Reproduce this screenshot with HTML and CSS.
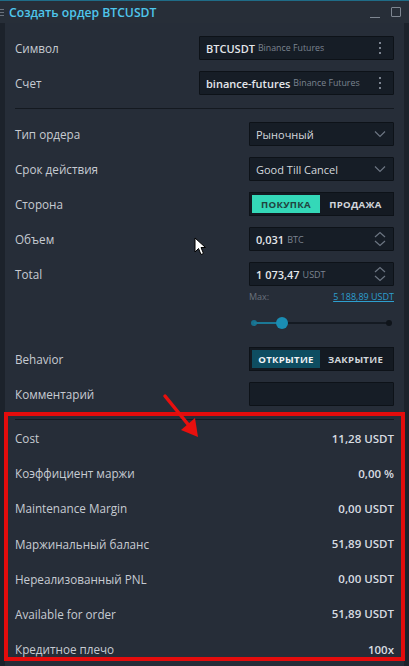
FILE: index.html
```html
<!DOCTYPE html>
<html lang="ru">
<head>
<meta charset="utf-8">
<title>Создать ордер BTCUSDT</title>
<link rel="stylesheet" href="styles.css">
</head>
<body>
<div class="window">
  <div class="titlebar">
    <span class="grip"><i></i><i></i><i></i></span>
    <span class="title">Создать ордер BTCUSDT</span>
    <span class="tb-btns">
      <span class="tb-min"></span>
      <span class="tb-max"></span>
    </span>
  </div>
  <div class="frame">
    <div class="panel">
      <div class="row">
        <span class="label">Символ</span>
        <div class="field wide">
          <span class="val">BTCUSDT</span><span class="sub">Binance Futures</span>
          <span class="kebab"><i></i><i></i><i></i></span>
        </div>
      </div>
      <div class="row">
        <span class="label">Счет</span>
        <div class="field wide">
          <span class="val">binance-futures</span><span class="sub">Binance Futures</span>
          <span class="kebab"><i></i><i></i><i></i></span>
        </div>
      </div>
      <div class="divider"></div>
      <div class="row">
        <span class="label">Тип ордера</span>
        <div class="field">
          <span class="val light">Рыночный</span>
          <svg class="chev" width="12" height="8" viewBox="0 0 12 8"><path d="M1 1.5 L6 6.5 L11 1.5" fill="none" stroke="#6c7582" stroke-width="1.2"/></svg>
        </div>
      </div>
      <div class="row">
        <span class="label">Срок действия</span>
        <div class="field">
          <span class="val light">Good Till Cancel</span>
          <svg class="chev" width="12" height="8" viewBox="0 0 12 8"><path d="M1 1.5 L6 6.5 L11 1.5" fill="none" stroke="#6c7582" stroke-width="1.2"/></svg>
        </div>
      </div>
      <div class="row">
        <span class="label">Сторона</span>
        <div class="toggle">
          <span class="seg buy">ПОКУПКА</span>
          <span class="seg">ПРОДАЖА</span>
        </div>
      </div>
      <div class="row">
        <span class="label">Объем</span>
        <div class="field">
          <span class="val">0,031</span><span class="unit">BTC</span>
          <svg class="spin" width="12" height="16" viewBox="0 0 12 16"><path d="M1 6 L6 1.5 L11 6 M1 10 L6 14.5 L11 10" fill="none" stroke="#6c7582" stroke-width="1.2"/></svg>
        </div>
      </div>
      <div class="row total">
        <span class="label">Total</span>
        <div class="ctrl-col">
          <div class="field">
            <span class="val">1 073,47</span><span class="unit">USDT</span>
            <svg class="spin" width="12" height="16" viewBox="0 0 12 16"><path d="M1 6 L6 1.5 L11 6 M1 10 L6 14.5 L11 10" fill="none" stroke="#6c7582" stroke-width="1.2"/></svg>
          </div>
          <div class="maxline">
            <span class="maxlbl">Max:</span>
            <span class="maxval">5 188,89 USDT</span>
          </div>
          <div class="slider">
            <span class="dot left"></span>
            <span class="fill"></span>
            <span class="knob"></span>
            <span class="dot right"></span>
          </div>
        </div>
      </div>
      <div class="row">
        <span class="label">Behavior</span>
        <div class="toggle">
          <span class="seg open">ОТКРЫТИЕ</span>
          <span class="seg">ЗАКРЫТИЕ</span>
        </div>
      </div>
      <div class="row">
        <span class="label">Комментарий</span>
        <div class="field"></div>
      </div>
      <div class="divider second"></div>
      <div class="info">
        <div class="irow"><span class="label">Cost</span><span class="ival">11,28 USDT</span></div>
        <div class="irow"><span class="label">Коэффициент маржи</span><span class="ival">0,00 %</span></div>
        <div class="irow"><span class="label">Maintenance Margin</span><span class="ival">0,00 USDT</span></div>
        <div class="irow"><span class="label">Маржинальный баланс</span><span class="ival">51,89 USDT</span></div>
        <div class="irow"><span class="label">Нереализованный PNL</span><span class="ival">0,00 USDT</span></div>
        <div class="irow"><span class="label">Available for order</span><span class="ival">51,89 USDT</span></div>
        <div class="irow"><span class="label">Кредитное плечо</span><span class="ival">100x</span></div>
      </div>
    </div>
  </div>

  <div class="redbox"></div>
  <svg class="arrow" width="60" height="60" viewBox="0 0 60 60">
    <line x1="5" y1="6" x2="31" y2="38" stroke="#e8100e" stroke-width="3.5" stroke-linecap="round"/>
    <polygon points="21,40 35,28 38,47" fill="#e8100e"/>
  </svg>
  <svg class="cursor" width="14" height="20" viewBox="0 0 14 20">
    <path d="M1 1 L1 15 L4.5 11.5 L7 17.5 L9.5 16.5 L7 10.5 L11.5 10.5 Z" fill="#ffffff" stroke="#000000" stroke-width="1" stroke-linejoin="miter"/>
  </svg>
</div>
</body>
</html>
```

FILE: styles.css
```css
* { box-sizing: border-box; }
html, body { margin: 0; padding: 0; }
body {
  background: #1c222b;
  font-family: "Open Sans", "Noto Sans", sans-serif;
  font-size: 12px;
  color: #c9ced5;
}
.window {
  position: relative;
  width: 409px;
  height: 666px;
  background: #1c222b;
  overflow: hidden;
}
.titlebar {
  height: 23px;
  border-top: 1px solid #1f6c87;
  background: #272e38;
  display: flex;
  align-items: center;
}
.grip {
  width: 4px;
  margin-right: 5px;
  display: flex;
  flex-direction: column;
  gap: 2px;
}
.grip i {
  display: block;
  width: 4px;
  height: 1px;
  background: #6a727d;
}
.title {
  color: #4fc6ec;
  font-weight: 600;
  font-size: 12.2px;
}
.tb-btns {
  margin-left: auto;
  display: flex;
  align-items: center;
  gap: 11px;
  padding-right: 8px;
}
.tb-min {
  width: 10px;
  height: 1px;
  background: #7e8691;
  margin-top: 10px;
}
.tb-max {
  width: 10px;
  height: 10px;
  border: 1px solid #7e8691;
  border-radius: 1px;
}
.frame {
  padding: 0 5px;
}
.panel {
  background: #262d38;
  padding: 13px 10px 8px 10px;
  min-height: 643px;
  display: flex;
  flex-direction: column;
}
.panel > * { flex-shrink: 0; }
.row {
  display: flex;
  justify-content: space-between;
  align-items: center;
  min-height: 24px;
  margin-bottom: 11px;
}
.row.total { align-items: flex-start; margin-bottom: 13px; }
.row.total > .label { line-height: 24px; }
.label {
  color: #c6cbd2;
  font-size: 11.7px;
}
.field {
  width: 145px;
  height: 24px;
  background: #161d26;
  border: 1px solid #0d1218;
  border-radius: 1px;
  display: flex;
  align-items: center;
  padding: 0 7px 0 6px;
  flex-shrink: 0;
}
.field.wide { width: 195px; }
.val {
  font-weight: 600;
  color: #e3e6ea;
  font-size: 11px;
  white-space: nowrap;
}
.val.light { font-weight: 400; color: #d4d8dd; }
.sub {
  color: #7c8490;
  font-size: 8.8px;
  margin-left: 3px;
  white-space: nowrap;
}
.unit {
  color: #7c8490;
  font-size: 9px;
  margin-left: 3px;
}
.kebab {
  margin-left: auto;
  display: flex;
  flex-direction: column;
  gap: 3px;
  margin-right: 5px;
}
.kebab i {
  display: block;
  width: 2px;
  height: 2px;
  background: #7c8490;
}
.chev, .spin { margin-left: auto; }
.divider {
  height: 1px;
  background: #141920;
  margin: 2px 0 13px 0;
}
.divider.second { margin: 2px 0 6px 0; }
.toggle {
  width: 145px;
  height: 24px;
  background: #141a22;
  border: 1px solid #0d1218;
  padding: 2px;
  display: flex;
}
.seg {
  flex: 1;
  display: flex;
  align-items: center;
  justify-content: center;
  font-size: 9.6px;
  font-weight: 700;
  letter-spacing: 0.3px;
  color: #d2d6db;
}
.seg.buy {
  flex: 0 0 68px;
  background: #34d8b8;
  color: #214340;
}
.seg.open {
  flex: 0 0 68px;
  background: #0e4d61;
  color: #f2f4f6;
}
.ctrl-col {
  width: 145px;
  display: flex;
  flex-direction: column;
}
.ctrl-col > * { flex-shrink: 0; }
.maxline {
  display: flex;
  justify-content: space-between;
  margin-top: 4px;
  font-size: 9px;
  height: 14px;
  line-height: 14px;
}
.maxlbl { color: #6a717c; }
.maxval { color: #2d9fcf; text-decoration: underline; }
.slider {
  position: relative;
  height: 22px;
  margin: 8px 5px 0 5px;
}
.slider::before {
  content: "";
  position: absolute;
  left: 0; right: 0;
  top: 10px;
  height: 2px;
  background: #141a22;
}
.slider .fill {
  position: absolute;
  left: 0;
  width: 28px;
  top: 10px;
  height: 2px;
  background: #1b7896;
}
.slider .dot {
  position: absolute;
  top: 8px;
  width: 6px;
  height: 6px;
  border-radius: 50%;
}
.slider .dot.left { left: -3px; background: #17708d; }
.slider .dot.right { right: -3px; background: #0f141a; }
.slider .knob {
  position: absolute;
  left: 22px;
  top: 5px;
  width: 12px;
  height: 12px;
  border-radius: 50%;
  background: #1a8db3;
}
.info {
  display: flex;
  flex-direction: column;
  gap: 11.2px;
}
.irow {
  display: flex;
  justify-content: space-between;
  align-items: center;
  height: 24px;
  flex-shrink: 0;
}
.ival {
  font-weight: 600;
  color: #d8dce1;
  font-size: 11.5px;
}
.redbox {
  position: absolute;
  left: 4px;
  top: 412px;
  width: 401px;
  height: 249px;
  border: 4px solid #e40c0c;
}
.arrow {
  position: absolute;
  left: 160px;
  top: 390px;
}
.cursor {
  position: absolute;
  left: 194px;
  top: 237px;
}
```
